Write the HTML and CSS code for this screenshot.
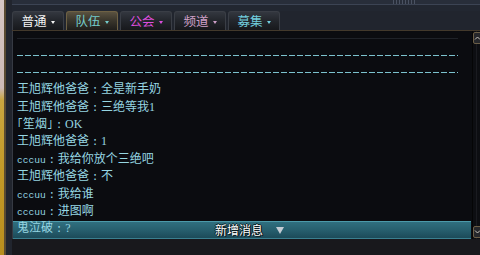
FILE: index.html
```html
<!DOCTYPE html>
<html>
<head>
<meta charset="utf-8">
<link rel="stylesheet" href="styles.css">
</head>
<body>
<div class="side"></div>
<div class="frame">
  <div class="topbar"><span class="grip"></span></div>
  <div class="tabs">
    <div class="tab t-normal">普通<i class="arrow"></i></div>
    <div class="tab t-team active">队伍<i class="arrow"></i></div>
    <div class="tab t-guild">公会<i class="arrow"></i></div>
    <div class="tab t-channel">频道<i class="arrow"></i></div>
    <div class="tab t-recruit">募集<i class="arrow"></i></div>
  </div>
  <div class="panel">
    <div class="chat">
      <div class="row sep"></div>
      <div class="row dash"></div>
      <div class="row dash"></div>
      <div class="row">王旭辉他爸爸<span class="colon">:</span>全是新手奶</div>
      <div class="row">王旭辉他爸爸<span class="colon">:</span>三绝等我<span class="num">1</span></div>
      <div class="row"><span class="num">｢</span>笙烟<span class="num">｣</span><span class="colon">:</span><span class="num">OK</span></div>
      <div class="row">王旭辉他爸爸<span class="colon">:</span><span class="num">1</span></div>
      <div class="row"><span class="lat">cccuu</span><span class="colon">:</span>我给你放个三绝吧</div>
      <div class="row">王旭辉他爸爸<span class="colon">:</span>不</div>
      <div class="row"><span class="lat">cccuu</span><span class="colon">:</span>我给谁</div>
      <div class="row"><span class="lat">cccuu</span><span class="colon">:</span>进图啊</div>
      <div class="row">鬼泣破<span class="colon">:</span><span class="num">?</span></div>
      <div class="newbar"><span class="label">新增消息</span><i class="down"></i></div>
    </div>
    <div class="scroll">
      <div class="sbtn"><svg width="8" height="6" viewBox="0 0 8 6"><polyline points="1,4.5 3.5,2 6,4.5" fill="none" stroke="#c8c4bc" stroke-width="1"/></svg></div>
      <div class="sbtn"><svg width="8" height="6" viewBox="0 0 8 6"><polyline points="1,1.5 3.5,4 6,1.5" fill="none" stroke="#c8c4bc" stroke-width="1"/></svg></div>
    </div>
  </div>
  <div class="footer"></div>
</div>
</body>
</html>
```

FILE: styles.css
```css
* { box-sizing: border-box; }

html, body {
  margin: 0;
  padding: 0;
}

body {
  width: 480px;
  height: 255px;
  overflow: hidden;
  display: flex;
  background: #22272f;
  font-family: "Noto Sans CJK SC", "Noto Sans", sans-serif;
  font-size: 12px;
}

.side {
  width: 6px;
  flex: none;
  border-right: 2px solid #5a4b32;
  background: linear-gradient(180deg, #d6c6c4 0px, #cdbab6 88px, #c9a640 100px, #c39a28 170px, #b88e1e 255px);
}

.frame {
  flex: 1;
  display: flex;
  flex-direction: column;
  padding-left: 6px;
  background: #21252e;
}

.topbar {
  height: 11px;
  flex: none;
  display: flex;
  background: linear-gradient(180deg, #282e3a 0 4px, #3c4454 4px 5px, #222731 5px);
}

.grip {
  width: 22px;
  height: 4px;
  margin-left: 381px;
  background: repeating-linear-gradient(90deg, #4a5262 0 1px, transparent 1px 3px);
}

.tabs {
  height: 19px;
  flex: none;
  display: flex;
  gap: 2px;
}

.tab {
  width: 52px;
  display: flex;
  align-items: center;
  justify-content: center;
  border: 1px solid #3a3e46;
  border-bottom: none;
  border-radius: 3px 3px 0 0;
  background: linear-gradient(180deg, #33373f 0%, #24272d 45%, #17181c 100%);
  line-height: 1;
  padding-top: 1px;
  font-size: 12.5px;
}

.tab.active {
  border-color: #6e6144;
  background: linear-gradient(180deg, #5a5240 0%, #3b372d 45%, #1f1e1b 100%);
}

.arrow {
  width: 0;
  height: 0;
  margin-left: 4px;
  margin-top: 1px;
  border-top: 3px solid currentColor;
  border-left: 2.5px solid transparent;
  border-right: 2.5px solid transparent;
}

.t-normal { color: #f4f4f4; }
.t-team { color: #74cccc; }
.t-guild { color: #dc4edc; }
.t-channel { color: #cfa0c8; }
.t-recruit { color: #72cede; }

.panel {
  height: 209px;
  flex: none;
  display: flex;
  border-top: 1px solid #43392b;
}

.chat {
  flex: 1;
  position: relative;
  overflow: hidden;
  display: flex;
  flex-direction: column;
  justify-content: flex-end;
  padding: 0 0 3.3px 4px;
  background: #0b0c10;
  border-left: 1px solid #363a43;
  color: #96d6e2;
}

.row {
  height: 17.375px;
  line-height: 17.375px;
  flex: none;
  white-space: nowrap;
  position: relative;
  z-index: 1;
}

.sep {
  width: 441px;
  background: linear-gradient(#1f2228, #1f2228) 0 11px / 100% 1px no-repeat;
}

.dash {
  width: 441px;
  background: repeating-linear-gradient(90deg, #7cc2ce 0 6px, transparent 6px 8px) 0 10px / 100% 1px no-repeat;
}

.colon {
  display: inline-block;
  width: 12px;
  text-align: center;
  font-family: "Liberation Mono", monospace;
  font-size: 11px;
}

.lat {
  font-family: "Liberation Mono", "DejaVu Sans Mono", monospace;
  font-size: 9.6px;
}

.num {
  display: inline-block;
  width: 6px;
  text-align: center;
  font-family: "Liberation Serif", serif;
  font-size: 12px;
}

.num + .num, .colon + .num:not(:last-child) {
  width: auto;
}

.newbar {
  position: absolute;
  left: -1px;
  right: 1px;
  bottom: 0;
  height: 18px;
  display: flex;
  align-items: center;
  justify-content: center;
  padding-left: 16px;
  gap: 13px;
  border-top: 1px solid #4c9aaa;
  border-bottom: 1px solid #3a7f8f;
  background: linear-gradient(180deg, #306f7f 0%, #275f6e 50%, #1c4b59 100%);
}

.label {
  color: #ffffff;
  line-height: 1;
  text-shadow: 1px 1px 0 #0a1a20, -1px 0 0 #0a1a20, 0 -1px 0 #0a1a20, 1px 0 0 #0a1a20;
}

.down {
  width: 0;
  height: 0;
  border-top: 7px solid #c4ccd4;
  border-left: 4px solid transparent;
  border-right: 4px solid transparent;
}

.scroll {
  width: 8px;
  flex: none;
  overflow: hidden;
  display: flex;
  flex-direction: column;
  justify-content: space-between;
  padding: 1px 0 1px 1px;
  background: linear-gradient(90deg, #050506 0 1px, #0d0e12 1px 4px, #1a1b20 4px 5px, #0d0e12 5px);
}

.sbtn {
  width: 12px;
  height: 12px;
  flex: none;
  border: 1px solid #6b5e47;
  border-radius: 2px;
  background: #26272b;
  display: flex;
  align-items: center;
}

.footer {
  flex: 1;
  background: #18181c;
}
```
